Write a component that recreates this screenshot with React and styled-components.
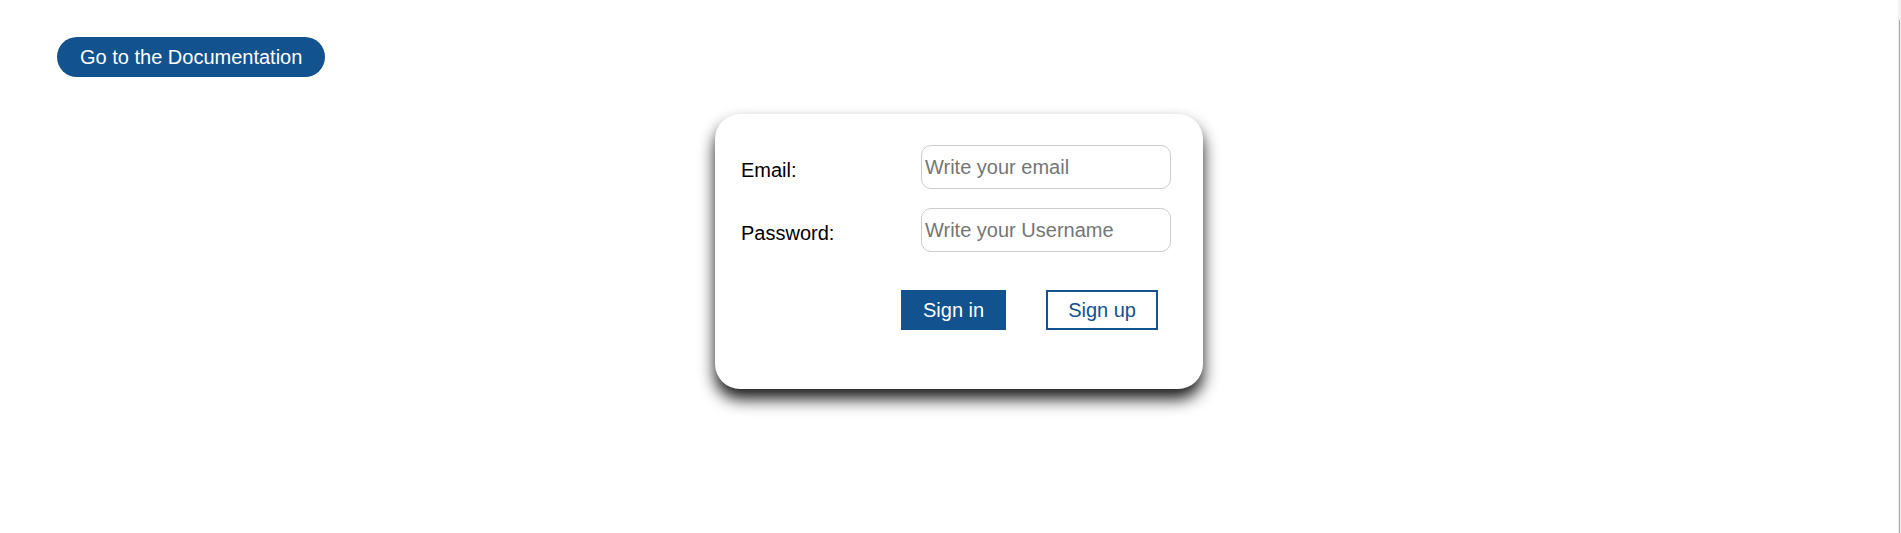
import React from "react";
import styled, { createGlobalStyle } from "styled-components";

const GlobalStyle = createGlobalStyle`
  html, body {
    margin: 0;
    padding: 0;
    background: #ffffff;
    font-family: "Liberation Sans", Arial, sans-serif;
  }
`;

const Page = styled.div`
  width: 100%;
  min-height: 533px;
  padding: 37px 0 0 57px;
  box-sizing: border-box;
`;

const DocButton = styled.button`
  height: 40px;
  padding: 0 23px;
  border: none;
  border-radius: 20px;
  background-color: #11528f;
  color: #ffffff;
  font-family: inherit;
  font-size: 20px;
  cursor: pointer;
`;

const Center = styled.div`
  display: flex;
  justify-content: center;
  padding: 37px 40px 0 0;
`;

const Card = styled.form`
  width: 488px;
  height: 275px;
  box-sizing: border-box;
  padding: 31px 31px 0 26px;
  background: #ffffff;
  border-radius: 25px;
  box-shadow: 0 10px 16px rgba(0, 0, 0, 0.9);
`;

const Fields = styled.div`
  display: grid;
  grid-template-columns: 180px 250px;
  row-gap: 19px;
  align-items: center;
`;

const Label = styled.label`
  font-size: 20px;
  color: #000000;
  padding-top: 6px;
`;

const Input = styled.input`
  width: 250px;
  height: 44px;
  box-sizing: border-box;
  padding: 0 3px;
  border: 1px solid #cccccc;
  border-radius: 10px;
  font-family: inherit;
  font-size: 20px;
  outline: none;
  &::placeholder {
    color: #757575;
  }
`;

const Actions = styled.div`
  display: flex;
  justify-content: flex-end;
  gap: 40px;
  margin-top: 38px;
  padding-right: 14px;
`;

const ActionButton = styled.button`
  height: 40px;
  box-sizing: border-box;
  padding: 0 20px;
  border: 2px solid #11528f;
  background: ${(p) => (p.$primary ? "#11528f" : "#ffffff")};
  color: ${(p) => (p.$primary ? "#ffffff" : "#11528f")};
  font-family: inherit;
  font-size: 20px;
  cursor: pointer;
`;

const Scrollbar = styled.div`
  position: fixed;
  top: 0;
  right: 0;
  width: 3px;
  height: 100vh;
  background: #f1f1f1;
  &::after {
    content: "";
    position: absolute;
    top: 20px;
    bottom: 0;
    left: 1px;
    width: 1px;
    background: #a8a8a8;
  }
`;

export default function App() {
  return (
    <>
      <GlobalStyle />
      <Page>
        <DocButton>Go to the Documentation</DocButton>
        <Center>
          <Card onSubmit={(e) => e.preventDefault()}>
            <Fields>
              <Label htmlFor="email">Email:</Label>
              <Input id="email" type="email" placeholder="Write your email" />
              <Label htmlFor="password">Password:</Label>
              <Input id="password" type="password" placeholder="Write your Username" />
            </Fields>
            <Actions>
              <ActionButton $primary type="submit">Sign in</ActionButton>
              <ActionButton type="button">Sign up</ActionButton>
            </Actions>
          </Card>
        </Center>
      </Page>
      <Scrollbar />
    </>
  );
}
